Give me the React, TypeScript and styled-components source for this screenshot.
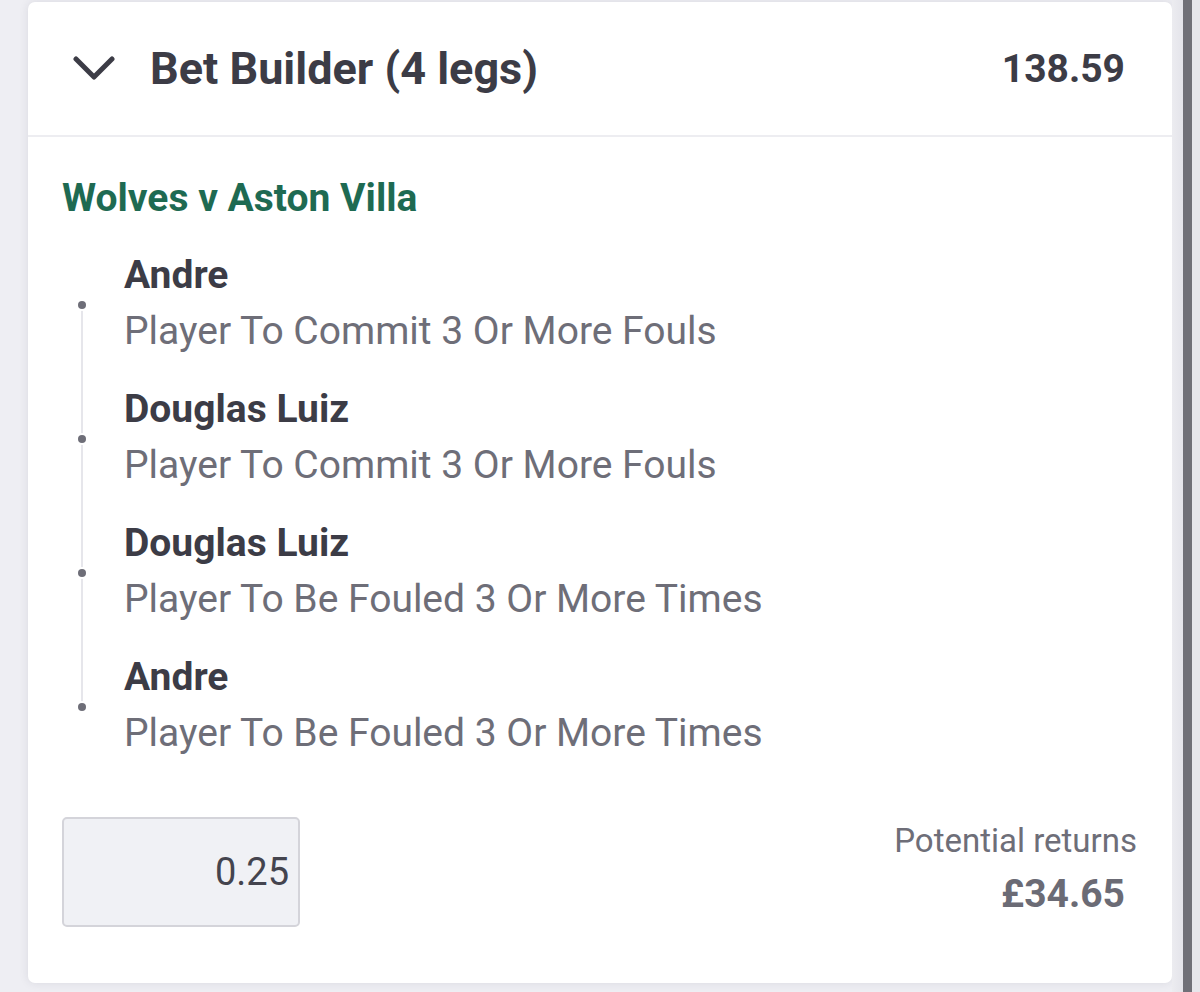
import React from "react";
import styled, { createGlobalStyle } from "styled-components";

const GlobalStyle = createGlobalStyle`
  html, body { margin: 0; padding: 0; }
  body {
    background: #eeeef3;
    font-family: Roboto, "Noto Sans", "Liberation Sans", sans-serif;
    -webkit-font-smoothing: antialiased;
  }
`;

const Page = styled.div`
  display: flex;
  width: 1200px;
  height: 992px;
  overflow: hidden;
  background: #eeeef3;
`;

const Content = styled.div`
  width: 1144px;
  padding: 2px 0 0 28px;
`;

const Gutter = styled.div`
  width: 11px;
  background: linear-gradient(90deg, #ececf0, #e4e4ea);
`;

const ScrollThumb = styled.div`
  width: 9px;
  background: #707078;
`;

const ScrollEdge = styled.div`
  flex: 1;
  background: #e6e6eb;
`;

const Card = styled.section`
  background: #ffffff;
  border-radius: 7px;
  box-shadow: 0 0 10px rgba(40, 40, 60, 0.1);
  height: 981px;
  box-sizing: border-box;
  display: flex;
  flex-direction: column;
`;

const Header = styled.header`
  height: 133px;
  display: flex;
  align-items: center;
  padding: 0 47px 0 45px;
  border-bottom: 2px solid #ededf1;
  color: #3c3c46;
`;

const Chevron = styled.svg`
  width: 42px;
  height: 26px;
  flex: none;
  margin-right: 35px;
  margin-top: -2px;
`;

const Title = styled.h2`
  flex: 1;
  margin: 0;
  font-size: 45px;
  font-weight: 700;
  line-height: 52px;
`;

const Odds = styled.span`
  font-size: 39px;
  font-weight: 700;
  line-height: 48px;
`;

const Body = styled.div`
  flex: 1;
  padding: 33px 35px 56px 34px;
  display: flex;
  flex-direction: column;
`;

const Match = styled.h3`
  margin: 0;
  font-size: 39px;
  font-weight: 700;
  line-height: 56px;
  color: #1e6a52;
`;

const LegList = styled.ul`
  list-style: none;
  margin: 21px 0 0;
  padding: 0;
  position: relative;
  display: flex;
  flex-direction: column;
  gap: 22px;

  &::before {
    content: "";
    position: absolute;
    left: 19px;
    top: 58px;
    bottom: 54px;
    width: 2px;
    background: #e6e6eb;
  }
`;

const Leg = styled.li`
  position: relative;
  padding-left: 62px;

  &::before {
    content: "";
    position: absolute;
    left: 16px;
    top: 54px;
    width: 8px;
    height: 8px;
    border-radius: 50%;
    background: #6e6e78;
    box-shadow: 0 0 0 2px #ffffff;
  }
`;

const LegName = styled.div`
  font-size: 39px;
  font-weight: 700;
  line-height: 56px;
  color: #3c3c46;
`;

const LegMarket = styled.div`
  font-size: 39px;
  font-weight: 400;
  line-height: 56px;
  color: #6e6e78;
`;

const Footer = styled.div`
  margin-top: auto;
  display: flex;
  justify-content: space-between;
  align-items: flex-start;
`;

const Stake = styled.div`
  width: 238px;
  height: 110px;
  box-sizing: border-box;
  border: 2px solid #d4d4da;
  border-radius: 5px;
  background: #f0f1f5;
  display: flex;
  align-items: center;
  justify-content: flex-end;
  padding-right: 9px;
  font-size: 38px;
  color: #44444e;
`;

const Returns = styled.div`
  display: flex;
  flex-direction: column;
  align-items: flex-end;
  padding-top: 2px;
`;

const ReturnsLabel = styled.span`
  font-size: 33px;
  line-height: 44px;
  color: #6e6e78;
`;

const ReturnsValue = styled.span`
  font-size: 39px;
  font-weight: 700;
  line-height: 52px;
  color: #6b6b75;
  margin-top: 5px;
  padding-right: 12px;
`;

const legs = [
  { name: "Andre", market: "Player To Commit 3 Or More Fouls" },
  { name: "Douglas Luiz", market: "Player To Commit 3 Or More Fouls" },
  { name: "Douglas Luiz", market: "Player To Be Fouled 3 Or More Times" },
  { name: "Andre", market: "Player To Be Fouled 3 Or More Times" },
];

export default function App() {
  return (
    <>
      <GlobalStyle />
      <Page>
        <Content>
          <Card>
            <Header>
              <Chevron viewBox="0 0 42 26">
                <polyline
                  points="3,4 21,22 39,4"
                  fill="none"
                  stroke="#3c3c46"
                  strokeWidth="5"
                  strokeLinecap="round"
                  strokeLinejoin="round"
                />
              </Chevron>
              <Title>Bet Builder (4 legs)</Title>
              <Odds>138.59</Odds>
            </Header>
            <Body>
              <Match>Wolves v Aston Villa</Match>
              <LegList>
                {legs.map((l, i) => (
                  <Leg key={i}>
                    <LegName>{l.name}</LegName>
                    <LegMarket>{l.market}</LegMarket>
                  </Leg>
                ))}
              </LegList>
              <Footer>
                <Stake>0.25</Stake>
                <Returns>
                  <ReturnsLabel>Potential returns</ReturnsLabel>
                  <ReturnsValue>£34.65</ReturnsValue>
                </Returns>
              </Footer>
            </Body>
          </Card>
        </Content>
        <Gutter />
        <ScrollThumb />
        <ScrollEdge />
      </Page>
    </>
  );
}
